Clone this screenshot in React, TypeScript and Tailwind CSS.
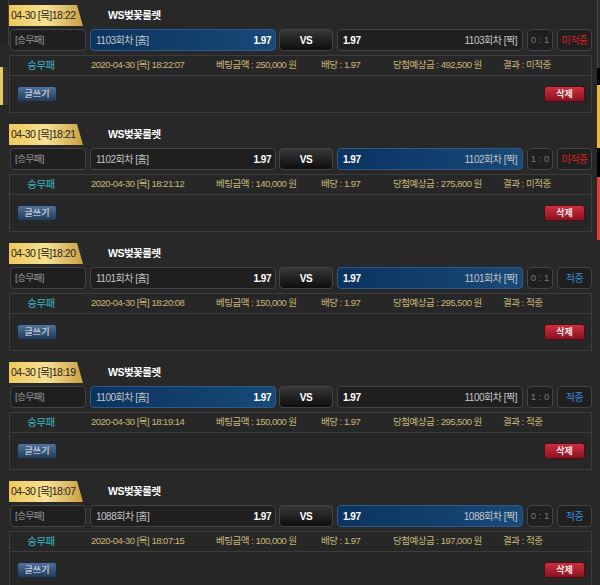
import React from "react";

type Bet = {
  time: string;
  round: string;
  pick: "home" | "away";
  score: string;
  win: boolean;
  date: string;
  amount: string;
  payout: string;
};

const bets: Bet[] = [
  { time: "04-30 [목]18:22", round: "1103", pick: "home", score: "0 : 1", win: false, date: "2020-04-30 [목] 18:22:07", amount: "250,000", payout: "492,500" },
  { time: "04-30 [목]18:21", round: "1102", pick: "away", score: "1 : 0", win: false, date: "2020-04-30 [목] 18:21:12", amount: "140,000", payout: "275,800" },
  { time: "04-30 [목]18:20", round: "1101", pick: "away", score: "0 : 1", win: true, date: "2020-04-30 [목] 18:20:08", amount: "150,000", payout: "295,500" },
  { time: "04-30 [목]18:19", round: "1100", pick: "home", score: "1 : 0", win: true, date: "2020-04-30 [목] 18:19:14", amount: "150,000", payout: "295,500" },
  { time: "04-30 [목]18:07", round: "1088", pick: "away", score: "0 : 1", win: true, date: "2020-04-30 [목] 18:07:15", amount: "100,000", payout: "197,000" },
];

const font = { fontFamily: '"Liberation Sans", "Noto Sans CJK KR", sans-serif' };

function BetCard({ b }: { b: Bet }) {
  const sel = "border-[#2d5a88] bg-gradient-to-r from-[#0b3360] to-[#184a78]";
  const unsel = "border-[#444] bg-[#1f1f1f]";
  return (
    <div className="mb-[11px]">
      <div className="flex h-[21px] items-center">
        <div className="flex h-[21px] w-[74px] shrink-0 items-center whitespace-nowrap bg-gradient-to-r from-[#eec858] via-[#f7e194] to-[#caa042] pl-[2px] text-[10.5px] tracking-[-0.5px] text-[#2a2418] [clip-path:polygon(0_0,68px_0,100%_100%,0_100%)]">
          {b.time}
        </div>
        <div className="ml-[25px] whitespace-nowrap text-[10.5px] font-bold tracking-[-0.5px] text-white">WS벚꽃룰렛</div>
      </div>
      <div className="ml-[1px] mt-[3px] flex h-[22px] whitespace-nowrap text-[10px] tracking-[-0.5px]">
        <div className="flex w-[76px] shrink-0 items-center rounded-[4px] border border-[#444] bg-[#1f1f1f] pl-[4px] text-[9.5px] text-[#9a9a9a]">
          [승무패]
        </div>
        <div className={`ml-[4px] flex w-[186px] shrink-0 items-center justify-between rounded-[4px] border pl-[5px] pr-[4px] ${b.pick === "home" ? sel : unsel}`}>
          <span className="text-[#c4c4c4]">{b.round}회차 [홈]</span>
          <span className="font-bold text-white">1.97</span>
        </div>
        <div className="ml-[3px] flex w-[54px] shrink-0 items-center justify-center rounded-[4px] border border-[#444] bg-gradient-to-b from-[#383838] to-[#0e0e0e] text-[10px] font-bold text-white">
          VS
        </div>
        <div className={`ml-[4px] flex w-[186px] shrink-0 items-center justify-between rounded-[4px] border pl-[5px] pr-[5px] ${b.pick === "away" ? sel : unsel}`}>
          <span className="font-bold text-white">1.97</span>
          <span className="text-[#c4c4c4]">{b.round}회차 [짝]</span>
        </div>
        <div className="ml-[4px] flex w-[26px] shrink-0 items-center justify-center rounded-[4px] border border-[#444] bg-[#1f1f1f] text-[9.5px] tracking-[0px] text-[#777]">
          {b.score}
        </div>
        <div className={`ml-[4px] flex w-[35px] shrink-0 items-center justify-center rounded-[4px] border border-[#444] bg-[#1f1f1f] text-[10px] ${b.win ? "text-[#3a8ad6]" : "text-[#d42222]"}`}>
          {b.win ? "적중" : "미적중"}
        </div>
      </div>
      <div className="mt-[4px] border border-[#3c3c3c] bg-[#272727]">
        <div className="flex h-[20px] items-center whitespace-nowrap border-b border-[#3c3c3c] text-[9.5px] tracking-[-0.5px] text-[#c8b878]">
          <span className="w-[62px] shrink-0 text-center text-[10.5px] text-[#3bb4c4]">승무패</span>
          <span className="ml-[19px] w-[125px] shrink-0">{b.date}</span>
          <span className="w-[105px] shrink-0">베팅금액 : {b.amount} 원</span>
          <span className="w-[72px] shrink-0">배당 : 1.97</span>
          <span className="w-[110px] shrink-0">당첨예상금 : {b.payout} 원</span>
          <span>결과 : {b.win ? "적중" : "미적중"}</span>
        </div>
        <div className="flex h-[36px] items-center justify-between pl-[7px] pr-[6px]">
          <div className="flex h-[16px] w-[40px] shrink-0 items-center justify-center rounded-[3px] border border-[#1a2a3c] bg-gradient-to-b from-[#52729a] to-[#223c5a] text-[9px] leading-none text-[#e8eef4]">
            글쓰기
          </div>
          <div className="flex h-[16px] w-[41px] shrink-0 items-center justify-center rounded-[3px] border border-[#4a0e14] bg-gradient-to-b from-[#cc3040] to-[#8a1222] text-[9px] font-bold leading-none text-[#f4e4e4]">
            삭제
          </div>
        </div>
      </div>
    </div>
  );
}

export default function App() {
  return (
    <div className="flex h-[585px] w-[600px] overflow-hidden bg-[#282828]" style={font}>
      <div className="flex w-[9px] shrink-0 flex-col">
        <div className="h-[45px] w-[9px] border-r border-[#3e3e3e] bg-[#242424]" />
        <div className="mt-[22px] flex h-[38px]">
          <div className="w-[3px] bg-[#e8c860]" />
          <div className="w-[5px] bg-[#333]" />
        </div>
      </div>
      <div className="w-[583px] shrink-0 pt-[5px]">
        {bets.map((b, i) => (
          <BetCard key={i} b={b} />
        ))}
      </div>
      <div className="ml-[5px] flex w-[3px] shrink-0 flex-col">
        <div className="h-[68px] border-l border-[#4a4a4a] bg-[#2e2e2e]" />
        <div className="h-[17px] bg-black" />
        <div className="h-[63px] bg-[#f0b830]" />
        <div className="h-[29px] bg-black" />
        <div className="h-[63px] bg-[#e84030]" />
      </div>
    </div>
  );
}
